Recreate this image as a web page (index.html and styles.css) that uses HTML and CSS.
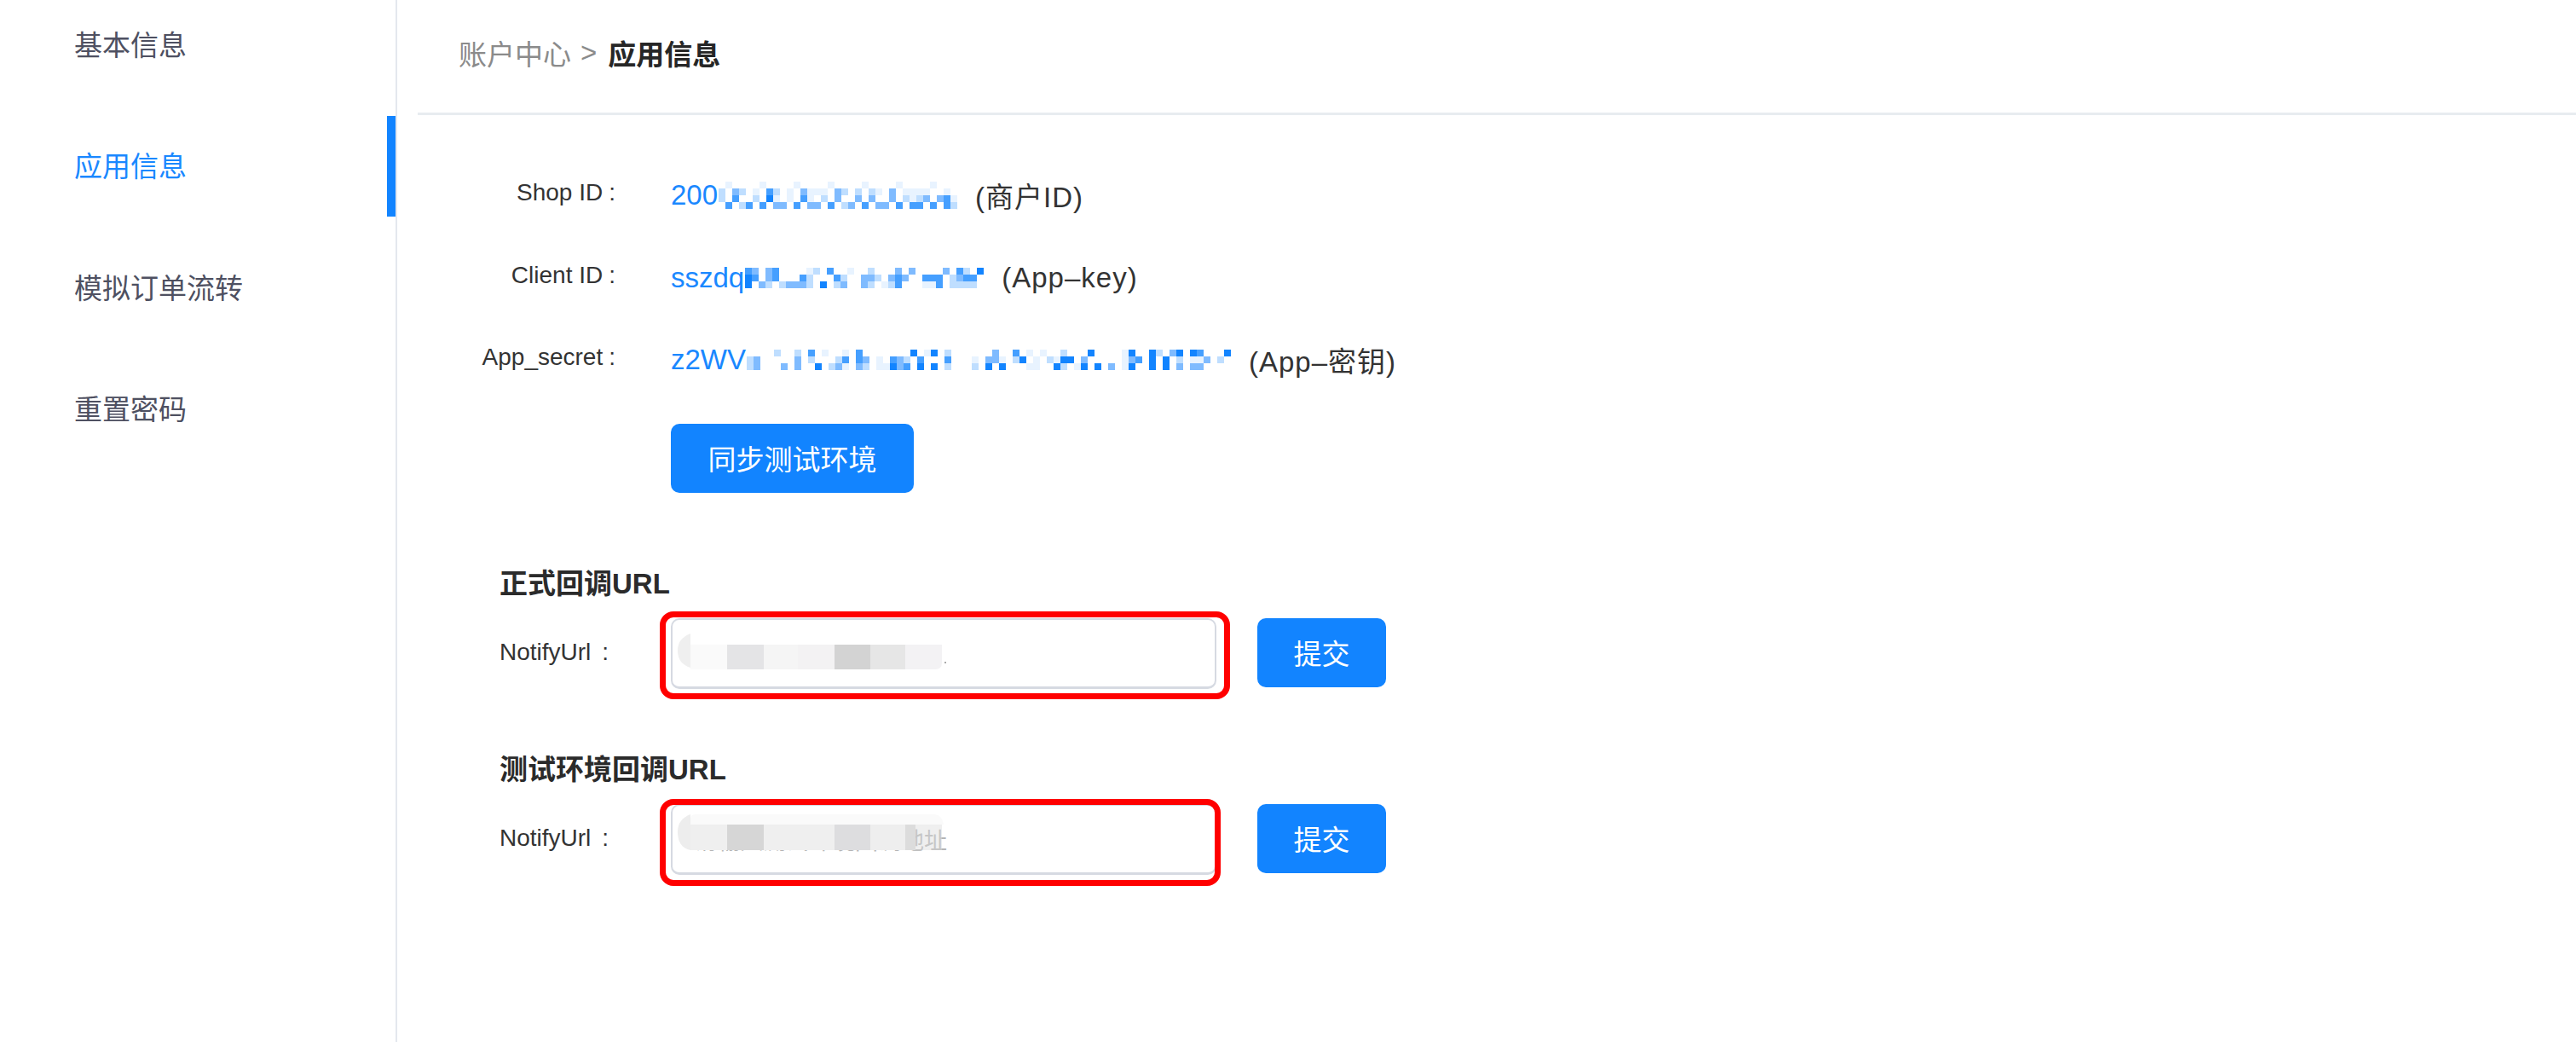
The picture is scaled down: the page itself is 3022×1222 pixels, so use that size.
FILE: index.html
```html
<!DOCTYPE html>
<html>
<head>
  <meta charset="UTF-8">
  <title>应用信息</title>
  <link rel="stylesheet" href="styles.css">
</head>
<body>
  <div class="sidebar">
    <a href="javascript:;" class="menu-item">基本信息</a>
    <a href="javascript:;" class="menu-item on">应用信息</a>
    <a href="javascript:;" class="menu-item">模拟订单流转</a>
    <a href="javascript:;" class="menu-item">重置密码</a>
  </div>
  <div class="main">
    <div class="crumb">
      <span class="crumb-parent">账户中心</span>
      <span class="crumb-sep">&gt;</span>
      <b class="crumb-now">应用信息</b>
    </div>

    <div class="info-list">
      <div class="info-row">
        <label class="info-label">Shop ID<span class="colon">:</span></label>
        <div class="info-value">
          <span class="secret">200</span>
          <svg class="mosaic" width="280" height="32" viewBox="0 0 280 32">
            <path class="e" d="M8 4h8M48 4h8M88 4h8M128 4h8M168 4h8M208 4h8M248 4h8M40 12h8M80 12h8M104 12h24M184 12h8M216 12h32M264 12h8M64 20h8M80 20h8M104 20h8M224 20h8M272 20h8"/>
            <path class="l" d="M0 12h8M24 12h8M64 12h8M144 12h8M160 12h8M176 12h8M0 20h8M40 20h8M120 20h8M216 20h8M232 20h8M24 28h8M144 28h8M272 28h8"/>
            <path class="m" d="M16 12h8M96 12h8M136 12h8M200 12h8M136 20h8M160 20h8M176 20h8M200 20h8M240 20h8M256 20h8M64 28h16M104 28h16M152 28h8M184 28h16"/>
            <path class="s" d="M56 12h8M16 20h8M96 20h8M264 20h8M8 28h8M32 28h8M48 28h8M88 28h8M128 28h8M168 28h8M208 28h8M224 28h16M248 28h8M264 28h8"/>
            <path class="f" d="M56 20h8"/>
          </svg>
          <span class="note">(商户ID)</span>
        </div>
      </div>
      <div class="info-row">
        <label class="info-label">Client ID<span class="colon">:</span></label>
        <div class="info-value">
          <span class="secret">sszdq</span>
          <svg class="mosaic" width="280" height="24" viewBox="0 0 280 24">
            <path class="e" d="M72 4h8M120 4h8M160 20h8M208 20h16"/>
            <path class="l" d="M80 4h8M144 4h8M256 4h8M72 12h8M112 12h8M152 12h8M240 12h8M24 20h8M40 20h8M72 20h8M104 20h8M144 20h8M168 20h8M240 20h32"/>
            <path class="m" d="M8 4h8M24 4h8M176 4h8M192 4h8M232 4h8M24 12h8M136 12h16M168 12h8M184 12h8M248 12h8M16 20h8M48 20h24M112 20h8M136 20h8"/>
            <path class="s" d="M0 4h8M32 4h8M96 4h8M248 4h8M8 12h8M32 12h8M64 12h8M104 12h8M176 12h8M208 12h24M256 12h16M176 20h8M224 20h8"/>
            <path class="f" d="M272 4h8M0 12h8M0 20h8M88 20h8"/>
          </svg>
          <span class="note">(App–key)</span>
        </div>
      </div>
      <div class="info-row">
        <label class="info-label">App_secret<span class="colon">:</span></label>
        <div class="info-value">
          <span class="secret">z2WV</span>
          <svg class="mosaic" width="568" height="24" viewBox="0 0 568 24">
            <path class="e" d="M88 4h8M112 4h8M208 4h8M328 4h8M344 4h8M440 4h8M152 12h8M264 12h8M296 12h8M336 12h8M360 12h8M440 12h8M520 12h16M112 20h8M152 20h16M328 20h16M384 20h8M440 20h8"/>
            <path class="l" d="M32 4h8M56 4h8M232 4h8M368 4h8M480 4h8M0 12h8M72 12h8M104 12h8M184 12h8M312 12h8M352 12h8M504 12h8M552 12h8M0 20h8M96 20h8M136 20h8M232 20h8M264 20h8M368 20h8"/>
            <path class="m" d="M288 4h8M496 4h8M8 12h8M56 12h8M136 12h8M176 12h8M280 12h16M392 12h8M448 12h8M536 12h8M8 20h8M40 20h8M56 20h8M104 20h8M128 20h8M176 20h8M424 20h8M504 20h8M520 20h16"/>
            <path class="s" d="M72 4h8M128 4h8M312 4h8M528 4h8M112 12h8M128 12h8M168 12h8M200 12h8M232 12h8M456 12h8M184 20h8"/>
            <path class="f" d="M192 4h8M216 4h8M400 4h8M448 4h8M472 4h8M504 4h8M520 4h8M560 4h8M320 12h8M368 12h16M472 12h8M488 12h8M80 20h8M168 20h8M200 20h8M216 20h8M280 20h8M296 20h8M360 20h8M392 20h8M408 20h8M448 20h8M472 20h8M488 20h8"/>
          </svg>
          <span class="note">(App–密钥)</span>
        </div>
      </div>
    </div>
    <a href="javascript:;" class="btn btn-sync">同步测试环境</a>

    <div class="notify">
      <h3 class="notify-title">正式回调URL</h3>
      <div class="notify-row">
        <label class="notify-label">NotifyUrl<span class="colon">:</span></label>
        <div class="field">
          <input class="field-input" type="text">
          <svg class="smudge" width="320" height="64" viewBox="0 0 320 64">
            <path fill="#efefef" d="M15 5C5 9 0 15 0 25s5 17 15 20z"/>
            <rect x="15" y="18" width="43" height="29" fill="#fafafa"/>
            <rect x="58" y="18" width="43" height="29" fill="#e4e4e6"/>
            <rect x="101" y="18" width="40" height="29" fill="#f5f5f5"/>
            <rect x="141" y="18" width="43" height="29" fill="#f3f2f3"/>
            <rect x="184" y="18" width="42" height="29" fill="#d3d3d3"/>
            <rect x="226" y="18" width="41" height="29" fill="#e6e6e6"/>
            <path fill="#f3f2f4" d="M267 18h43v21q0 8-8 8h-35z"/>
            <rect x="313" y="38" width="2" height="2" fill="#aaa"/>
          </svg>
          <div class="mark mark-one"></div>
        </div>
        <a href="javascript:;" class="btn btn-submit">提交</a>
      </div>
    </div>

    <div class="notify notify-test">
      <h3 class="notify-title">测试环境回调URL</h3>
      <div class="notify-row">
        <label class="notify-label">NotifyUrl<span class="colon">:</span></label>
        <div class="field">
          <input class="field-input" type="text" placeholder="请输入测试环境回调地址">
          <svg class="smudge smudge-test" width="320" height="64" viewBox="0 0 320 64">
            <path fill="#fafafa" d="M15 10Q15 5 22 5H300q10 0 12 12H15z"/>
            <path fill="#ededed" d="M15 5C5 9 0 15 0 26s5 19 15 21z"/>
            <rect x="15" y="17" width="43" height="30" fill="#efefef"/>
            <rect x="58" y="17" width="43" height="30" fill="#d6d6d6"/>
            <rect x="101" y="17" width="83" height="30" fill="#efefef"/>
            <rect x="184" y="17" width="42" height="30" fill="#dddddf"/>
            <rect x="226" y="17" width="41" height="30" fill="#eeeeee"/>
            <rect x="267" y="17" width="12" height="30" fill="#dcdcdc"/>
            <rect x="279" y="17" width="31" height="30" fill="#dcdcdc" fill-opacity=".45"/>
          </svg>
          <div class="mark mark-two"></div>
        </div>
        <a href="javascript:;" class="btn btn-submit">提交</a>
      </div>
    </div>
  </div>
</body>
</html>
```

FILE: styles.css
```css
* {
  margin: 0;
  padding: 0;
  box-sizing: border-box;
}
a {
  text-decoration: none;
}
html, body {
  height: 100%;
  overflow: hidden;
}
body {
  display: flex;
  background: #fff;
  font-family: "Liberation Sans", "Noto Sans CJK SC", sans-serif;
  color: #333;
}

.sidebar {
  width: 466px;
  height: 100%;
  border-right: 2px solid #e4e8ee;
  flex-shrink: 0;
}
.menu-item {
  display: flex;
  align-items: center;
  height: 118px;
  margin-bottom: 24.5px;
  padding: 0 0 3px 87px;
  font-size: 33px;
  color: #4e5061;
}
.menu-item:first-child {
  margin-top: -7px;
}
.menu-item.on {
  color: #1a88ff;
  border-right: 10px solid #1284ff;
}

.main {
  flex: 1;
  padding-left: 24px;
}
.crumb {
  display: flex;
  align-items: center;
  height: 135px;
  padding: 0 0 8px 48px;
  border-bottom: 3px solid #e8ecf0;
  font-size: 33px;
}
.crumb-parent {
  color: #8b8b8b;
}
.crumb-sep {
  margin: 0 13px 0 11px;
  color: #8b8b8b;
}
.crumb-now {
  color: #262626;
}

.info-list {
  margin-top: 46px;
}
.info-row {
  display: flex;
  align-items: center;
  height: 96.5px;
}
.info-label {
  width: 232px;
  padding-bottom: 6px;
  text-align: right;
  font-size: 28px;
  color: #333;
}
.colon {
  margin-left: 7px;
}
.info-value {
  display: flex;
  align-items: center;
  margin-left: 65px;
  font-size: 33px;
}
.secret {
  color: #1a88ff;
}
.mosaic {
  display: block;
  margin-left: 1px;
  shape-rendering: crispEdges;
}
.mosaic path {
  fill: none;
  stroke-width: 8;
}
.mosaic .e { stroke: #e8f3ff; }
.mosaic .l { stroke: #bfdeff; }
.mosaic .m { stroke: #7fbbff; }
.mosaic .s { stroke: #459fff; }
.mosaic .f { stroke: #1284ff; }
.note {
  margin-left: 21px;
  letter-spacing: 1px;
  color: #333;
}

.btn {
  display: flex;
  align-items: center;
  justify-content: center;
  background: #1284ff;
  border-radius: 10px;
  color: #fff;
  font-size: 33px;
}
.btn-sync {
  width: 285px;
  height: 81px;
  margin: 26px 0 0 297px;
}
.btn-submit {
  width: 151px;
  height: 81px;
  margin-left: 48px;
}

.notify {
  margin: 85px 0 0 96px;
}
.notify-test {
  margin-top: 73px;
}
.notify-title {
  height: 44px;
  line-height: 44px;
  font-size: 33px;
  font-weight: bold;
  color: #2b2b2b;
}
.notify-row {
  display: flex;
  align-items: flex-start;
  margin-top: 18px;
}
.notify-label {
  width: 201px;
  line-height: 80px;
  font-size: 28px;
  color: #333;
}
.notify-label .colon {
  margin-left: 13px;
}
.field {
  position: relative;
  width: 640px;
  height: 83px;
}
.field-input {
  width: 100%;
  height: 100%;
  padding: 8px 0 0 25px;
  border: 2px solid #d6dae2;
  border-bottom-width: 3px;
  border-radius: 10px;
  outline: none;
  font-family: inherit;
  font-size: 27px;
}
.field-input::placeholder {
  color: #b5b5b5;
}
.smudge {
  position: absolute;
  left: 8px;
  top: 13px;
}
.smudge-test {
  top: 7px;
}
.mark {
  position: absolute;
  left: -13px;
  border: 7px solid #f00;
  border-radius: 16px;
}
.mark-one {
  top: -8px;
  width: 669px;
  height: 103px;
}
.mark-two {
  top: -6px;
  width: 658px;
  height: 102px;
}
```
